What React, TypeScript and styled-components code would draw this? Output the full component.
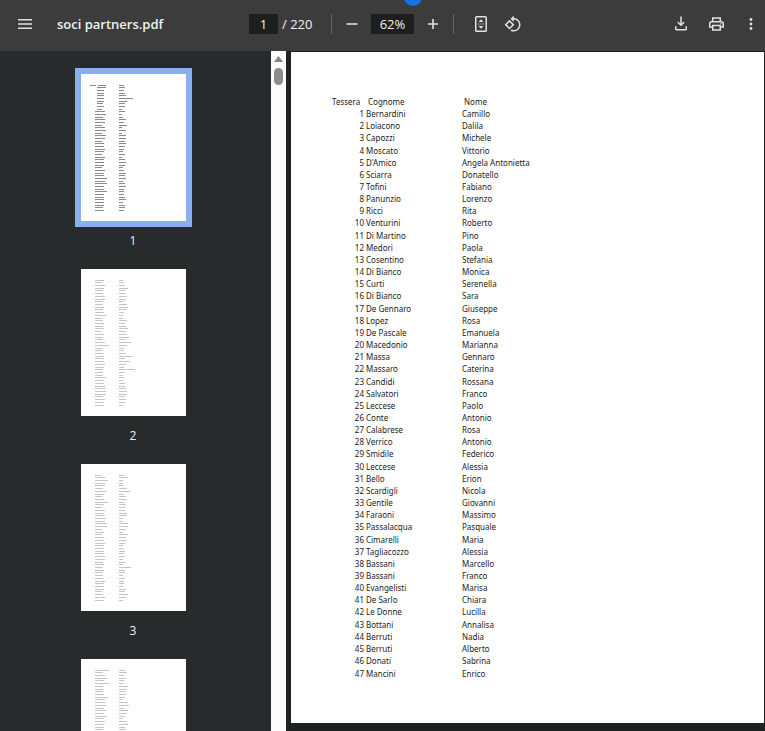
import React from "react";
import styled, { createGlobalStyle } from "styled-components";

const GlobalStyle = createGlobalStyle`
  * { box-sizing: border-box; }
  body { margin: 0; background: #222323; font-family: "Open Sans", "Noto Sans", sans-serif; }
  button, input { font: inherit; color: inherit; border: 0; padding: 0; margin: 0; background: none; }
`;

const members: [string, string][] = [
  ["Bernardini", "Camillo"], ["Loiacono", "Dalila"], ["Capozzi", "Michele"], ["Moscato", "Vittorio"],
  ["D'Amico", "Angela Antonietta"], ["Sciarra", "Donatello"], ["Tofini", "Fabiano"], ["Panunzio", "Lorenzo"],
  ["Ricci", "Rita"], ["Venturini", "Roberto"], ["Di Martino", "Pino"], ["Medori", "Paola"],
  ["Cosentino", "Stefania"], ["Di Bianco", "Monica"], ["Curti", "Serenella"], ["Di Bianco", "Sara"],
  ["De Gennaro", "Giuseppe"], ["Lopez", "Rosa"], ["De Pascale", "Emanuela"], ["Macedonio", "Marianna"],
  ["Massa", "Gennaro"], ["Massaro", "Caterina"], ["Candidi", "Rossana"], ["Salvatori", "Franco"],
  ["Leccese", "Paolo"], ["Conte", "Antonio"], ["Calabrese", "Rosa"], ["Verrico", "Antonio"],
  ["Smidile", "Federico"], ["Leccese", "Alessia"], ["Bello", "Erion"], ["Scardigli", "Nicola"],
  ["Gentile", "Giovanni"], ["Faraoni", "Massimo"], ["Passalacqua", "Pasquale"], ["Cimarelli", "Maria"],
  ["Tagliacozzo", "Alessia"], ["Bassani", "Marcello"], ["Bassani", "Franco"], ["Evangelisti", "Marisa"],
  ["De Sarlo", "Chiara"], ["Le Donne", "Lucilla"], ["Bottani", "Annalisa"], ["Berruti", "Nadia"],
  ["Berruti", "Alberto"], ["Donati", "Sabrina"], ["Mancini", "Enrico"],
];

type Line = { start: number; surname: number; name: number; lead?: number };
type ThumbnailData = { page: number; caption?: string; lines: Line[] };

const toLines = (start: number, surnames: number[], names: number[]): Line[] =>
  surnames.map((surname, i) => ({ start, surname, name: names[i] }));

const thumbnails: ThumbnailData[] = [
  {
    page: 1,
    caption: "1",
    lines: [
      { lead: 9, start: 17, surname: 8, name: 5 },
      ...members.map(([surname, name], i) => ({
        start: i < 9 ? 16 : 14,
        surname: Math.round(surname.length * 0.8) + (i < 9 ? 1 : 3),
        name: Math.round(name.length * 0.85),
      })),
    ],
  },
  {
    page: 2,
    caption: "2",
    lines: toLines(
      14,
      [9, 7, 10, 9, 8, 8, 10, 10, 8, 8, 9, 8, 9, 11, 7, 8, 9, 8, 9, 6, 9, 7, 8, 10, 14, 7, 7, 8, 9, 9, 9, 10, 9, 8, 8, 8, 11, 9, 9, 10, 10, 11, 11, 8, 10, 9, 9],
      [4, 5, 6, 9, 6, 7, 8, 7, 5, 8, 9, 7, 5, 4, 4, 8, 6, 7, 9, 7, 8, 10, 6, 12, 8, 5, 5, 7, 13, 6, 11, 7, 5, 16, 5, 4, 5, 4, 6, 6, 7, 8, 8, 6, 7, 6, 4],
    ),
  },
  {
    page: 3,
    caption: "3",
    lines: toLines(
      14,
      [6, 10, 13, 10, 10, 8, 11, 9, 7, 9, 13, 9, 7, 10, 9, 10, 11, 10, 12, 12, 7, 9, 7, 9, 9, 10, 9, 9, 9, 9, 10, 10, 8, 9, 8, 9, 8, 8, 8, 10, 9, 9, 9, 7, 8, 10, 9],
      [5, 9, 4, 4, 4, 8, 11, 5, 7, 8, 5, 7, 6, 6, 8, 8, 4, 4, 9, 9, 7, 4, 9, 7, 8, 6, 4, 5, 6, 5, 6, 4, 7, 4, 12, 6, 6, 4, 6, 5, 5, 4, 7, 6, 9, 7, 4],
    ),
  },
  {
    page: 4,
    lines: toLines(
      14,
      [14, 8, 10, 12, 9, 14, 8, 8, 8, 9, 13, 10, 10, 11, 9, 11, 9, 12, 9, 10, 9, 9, 8, 9, 11, 9, 8],
      [6, 8, 5, 7, 5, 4, 9, 8, 6, 7, 6, 4, 9, 10, 5, 9, 8, 6, 4, 7, 9, 6, 7, 5, 8, 6, 5],
    ),
  },
];

const Shell = styled.div`
  display: flex;
  flex-direction: column;
  height: 100vh;
  overflow: hidden;
`;

const Toolbar = styled.header`
  position: relative;
  display: grid;
  grid-template-columns: 1fr auto 1fr;
  flex: none;
  height: 51px;
  padding-bottom: 4px;
  background: #3c3c3c;
  color: #f1f1f1;
`;

const ToolbarStart = styled.div`
  display: flex;
  align-items: center;
  gap: 16px;
  min-width: 0;
  padding-left: 9px;
`;

const Title = styled.h1`
  margin: 0;
  font-size: 13px;
  line-height: 20px;
  font-weight: 600;
  white-space: nowrap;
`;

const ToolbarCenter = styled.div`
  display: flex;
  align-items: center;
  padding-left: 13px;
  font-size: 13px;
`;

const ToolbarEnd = styled.div`
  display: flex;
  align-items: center;
  justify-content: flex-end;
  gap: 7px;
`;

const IconButton = styled.button<{ $width?: number }>`
  display: flex;
  align-items: center;
  justify-content: center;
  width: ${(p) => p.$width ?? 32}px;
  height: 32px;
  flex: none;
  svg { display: block; fill: #e2e2e2; }
`;

const Field = styled.input<{ $width: number }>`
  && {
    width: ${(p) => p.$width}px;
    height: 20px;
    background: #1d1e1e;
    text-align: center;
  }
`;

const PageTotal = styled.span`
  width: 40px;
  padding-left: 4px;
  white-space: nowrap;
`;

const Divider = styled.span<{ $before: number; $after: number }>`
  width: 1px;
  height: 20px;
  margin: 0 ${(p) => p.$after}px 0 ${(p) => p.$before}px;
  background: #666;
`;

const ZoomGroup = styled.div`
  display: flex;
  align-items: center;
`;

const ZoomField = styled(Field)`
  && { margin-left: 3px; }
`;

const Bubble = styled.span`
  position: absolute;
  top: -12px;
  left: calc(50% + 21px);
  width: 18px;
  height: 18px;
  border-radius: 50%;
  background: #1473e6;
`;

const Viewer = styled.div`
  display: flex;
  flex: 1;
  min-height: 0;
`;

const Sidebar = styled.nav`
  display: flex;
  flex-direction: column;
  align-items: center;
  flex: none;
  width: 271px;
  padding: 23px 5px 0 0;
  overflow: hidden;
  background: #282b2c;
`;

const Thumb = styled.button`
  display: flex;
  flex-direction: column;
  align-items: center;
  gap: 10px;
  flex: none;
  height: 195px;
  && { color: #f1f1f1; font-size: 12px; line-height: 20px; }
`;

const Sheet = styled.svg<{ $active: boolean }>`
  display: block;
  width: 105px;
  height: 147px;
  background: #fff;
  box-shadow: ${(p) => (p.$active ? "0 0 0 6px #8aafef" : "none")};
  rect { fill: ${(p) => (p.$active ? "#8a8a8a" : "#c4c4c4")}; }
`;

const Scrollbar = styled.div`
  display: flex;
  flex-direction: column;
  align-items: center;
  gap: 5px;
  flex: none;
  width: 15px;
  padding-top: 4px;
  background: #fcfcfc;
`;

const ScrollUp = styled.button`
  display: block;
  height: 8px;
  svg { display: block; }
`;

const ScrollHandle = styled.div`
  width: 9px;
  height: 17px;
  border-radius: 5px;
  background: #8c8c8c;
`;

const Document = styled.main`
  flex: 1;
  min-width: 0;
  padding: 1px 1px 0 5px;
  overflow: hidden;
  background: #202121;
`;

const Page = styled.article`
  padding: 43px 40px 43px;
  background: #fff;
`;

const Members = styled.table`
  height: 585px;
  border-collapse: collapse;
  table-layout: fixed;
  width: 260px;
  color: #1c1c1c;
  font-family: "Noto Sans", sans-serif;
  font-size: 8px;
  line-height: 10px;
  white-space: nowrap;
  th, td { padding: 0; text-align: left; font-weight: 400; vertical-align: middle; }
  th { height: 13px; }
  td:first-child { text-align: right; }
  th:first-child { padding-left: 1px; }
  td + td { padding-left: 2px; }
  th + th { padding-left: 4px; }
`;

const Column = styled.col<{ $width: number }>`
  width: ${(p) => p.$width}px;
`;

const Thumbnail = ({ page, caption, lines }: ThumbnailData) => (
  <Thumb type="button" aria-label={`Page ${page}`}>
    <Sheet $active={page === 1} viewBox="0 0 105 147" shapeRendering="crispEdges" aria-hidden="true">
      {lines.map((line, i) => {
        const y = Math.round(10.5 + i * (page === 1 ? 2.67 : 2.72));
        return (
          <React.Fragment key={i}>
            {line.lead && <rect x={line.lead} y={y} width="6" height="1" />}
            <rect x={line.start} y={y} width={line.surname} height="1" />
            <rect x="38" y={y} width={line.name} height="1" />
          </React.Fragment>
        );
      })}
    </Sheet>
    {caption}
  </Thumb>
);

export default function App() {
  return (
    <Shell>
      <GlobalStyle />
      <Toolbar>
        <ToolbarStart>
          <IconButton type="button" aria-label="Menu">
            <svg width="14" height="10" viewBox="0 0 14 10">
              <path d="M0 0h14v1.600H0zM0 4.200h14v1.600H0zM0 8.400h14V10H0z" />
            </svg>
          </IconButton>
          <Title>soci partners.pdf</Title>
        </ToolbarStart>
        <ToolbarCenter>
          <Field $width={29} aria-label="Page number" defaultValue="1" />
          <PageTotal>/ 220</PageTotal>
          <Divider $before={13} $after={4} />
          <ZoomGroup>
            <IconButton type="button" aria-label="Zoom out">
              <svg width="12" height="12" viewBox="0 0 12 12"><path d="M.5 5.200h11v1.600H.5z" /></svg>
            </IconButton>
            <ZoomField $width={43} aria-label="Zoom level" defaultValue="62%" />
            <IconButton type="button" aria-label="Zoom in" $width={38}>
              <svg width="12" height="12" viewBox="0 0 12 12"><path d="M5.200 1h1.600v4.200H11v1.600H6.800V11H5.200V6.800H1V5.200h4.200z" /></svg>
            </IconButton>
          </ZoomGroup>
          <Divider $before={1} $after={11} />
          <IconButton type="button" aria-label="Fit to page">
            <svg width="12" height="16" viewBox="0 0 12 16">
              <path fillRule="evenodd" d="M1.500 0h9A1.500 1.500 0 0 1 12 1.500v13a1.500 1.500 0 0 1-1.500 1.500h-9A1.500 1.500 0 0 1 0 14.500v-13A1.500 1.500 0 0 1 1.500 0zM1.500 1.500v13h9v-13zM6 3.200 8.500 6h-5zM6 12.800 3.500 10h5zM3 7.400h1.200v1.200H3zM5.400 7.400h1.200v1.200H5.400zM7.800 7.400H9v1.200H7.800z" />
            </svg>
          </IconButton>
          <IconButton type="button" aria-label="Rotate counterclockwise">
            <svg width="18" height="18" viewBox="0 0 24 24">
              <path d="M7.340 6.410.860 12.900l6.490 6.480 6.490-6.480-6.500-6.490zM3.690 12.900l3.660-3.660L11 12.900l-3.660 3.660-3.650-3.660zm15.670-6.260C17.610 4.880 15.300 4 13 4V.760L8.760 5 13 9.240V6c1.790 0 3.580.680 4.950 2.050 2.730 2.730 2.730 7.170 0 9.900C16.580 19.320 14.790 20 13 20c-.970 0-1.940-.210-2.840-.610l-1.490 1.490C10.020 21.620 11.510 22 13 22c2.300 0 4.610-.880 6.360-2.640 3.520-3.510 3.520-9.210 0-12.720z" />
            </svg>
          </IconButton>
        </ToolbarCenter>
        <ToolbarEnd>
          <IconButton type="button" aria-label="Download" $width={28}>
            <svg width="18" height="18" viewBox="0 0 24 24">
              <path d="M11 2h2v9.200l2.600-2.600L17 10l-5 5-5-5 1.400-1.400 2.600 2.600zM4 15h2v3.500h12V15h2v3.500a2 2 0 0 1-2 2H6a2 2 0 0 1-2-2z" />
            </svg>
          </IconButton>
          <IconButton type="button" aria-label="Print" $width={28}>
            <svg width="19" height="18" viewBox="0 0 24 24">
              <path fillRule="evenodd" d="M19 8h-1V3H6v5H5c-1.660 0-3 1.340-3 3v6h4v4h12v-4h4v-6c0-1.660-1.340-3-3-3zM8 5h8v3H8V5zm8 12v2H8v-4h8v2zm2-2v-2H6v2H4v-4c0-.550.450-1 1-1h14c.550 0 1 .450 1 1v4h-2z" />
              <circle cx="18" cy="11.500" r="1" />
            </svg>
          </IconButton>
          <IconButton type="button" aria-label="More actions" $width={28}>
            <svg width="4" height="12" viewBox="0 0 4 12">
              <circle cx="2" cy="1.500" r="1.400" /><circle cx="2" cy="6" r="1.400" /><circle cx="2" cy="10.500" r="1.400" />
            </svg>
          </IconButton>
        </ToolbarEnd>
        <Bubble />
      </Toolbar>
      <Viewer>
        <Sidebar aria-label="Thumbnails">
          {thumbnails.map((t) => <Thumbnail key={t.page} {...t} />)}
        </Sidebar>
        <Scrollbar>
          <ScrollUp type="button" aria-label="Scroll up">
            <svg width="9" height="8" viewBox="0 0 9 8"><path d="M4.500 1 9 7H0z" fill="#858585" /></svg>
          </ScrollUp>
          <ScrollHandle />
        </Scrollbar>
        <Document>
          <Page>
            <Members>
              <colgroup>
                <Column $width={33} />
                <Column $width={96} />
                <Column $width={131} />
              </colgroup>
              <thead>
                <tr><th scope="col">Tessera</th><th scope="col">Cognome</th><th scope="col">Nome</th></tr>
              </thead>
              <tbody>
                {members.map(([surname, name], i) => (
                  <tr key={i}><td>{i + 1}</td><td>{surname}</td><td>{name}</td></tr>
                ))}
              </tbody>
            </Members>
          </Page>
        </Document>
      </Viewer>
    </Shell>
  );
}
